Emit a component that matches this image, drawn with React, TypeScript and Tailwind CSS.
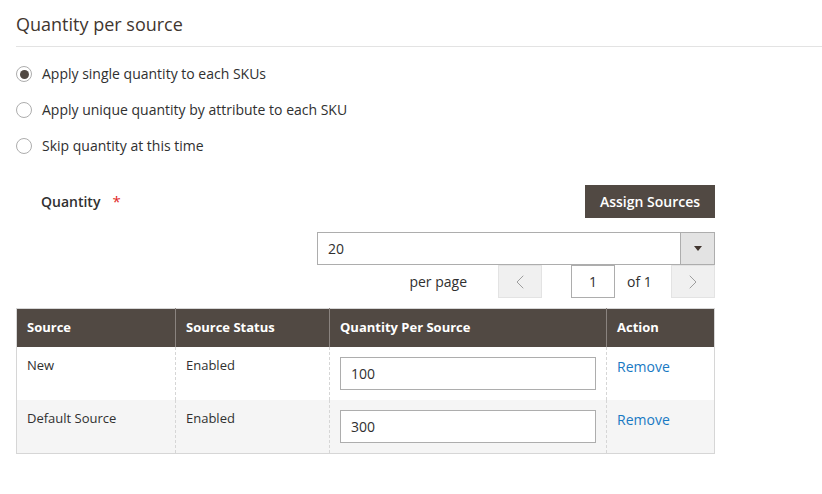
import { ChevronLeft, ChevronRight } from 'lucide-react'

const sources = [
	{ name: 'New', status: 'Enabled', qty: '100' },
	{ name: 'Default Source', status: 'Enabled', qty: '300' }
]

const options = [
	'Apply single quantity to each SKUs',
	'Apply unique quantity by attribute to each SKU',
	'Skip quantity at this time'
]

export default function App() {
	return (
		<div className="w-[822px] h-[494px] bg-white font-['Open_Sans',sans-serif] text-[#303030] pl-[16px] pt-[12px] overflow-hidden">
			<h2 className="text-[18px] leading-[24px] font-normal text-[#41362f] pb-[10px] border-b border-[#e3e3e3]">
				Quantity per source
			</h2>

			<div className="flex flex-col gap-[16px] mt-[17px]">
				{options.map((label, i) => (
					<label key={i} className="flex items-center gap-[10px] text-[14px] leading-[20px]">
						<span className="w-[16px] h-[16px] rounded-full border border-[#adadad] bg-white flex items-center justify-center">
							{i === 0 && <span className="w-[9px] h-[9px] rounded-full bg-[#514943]" />}
						</span>
						{label}
					</label>
				))}
			</div>

			<div className="w-[699px] mt-[29px]">
				<div className="flex items-center justify-between">
					<div className="pl-[25px] text-[14px] font-semibold flex items-center">
						Quantity
						<span className="text-[#e22626] font-normal ml-[12px] text-[15px]">*</span>
					</div>
					<button className="h-[33px] w-[130px] bg-[#514943] text-white text-[14px] font-semibold">
						Assign Sources
					</button>
				</div>

				<div className="flex justify-end mt-[14px]">
					<div className="w-[398px] h-[33px] border border-[#adadad] flex">
						<div className="flex-1 px-[10px] flex items-center text-[14px]">20</div>
						<div className="w-[34px] bg-[#e3e3e3] border-l border-[#adadad] flex items-center justify-center">
							<span className="w-0 h-0 border-l-[4px] border-r-[4px] border-t-[5px] border-l-transparent border-r-transparent border-t-[#41362f]" />
						</div>
					</div>
				</div>

				<div className="flex justify-end items-center h-[33px] text-[14px]">
					<span className="mr-[31px] text-[#303030]">per page</span>
					<div className="w-[44px] h-[33px] bg-[#f0f0f0] border border-[#e3e3e3] flex items-center justify-center text-[#9e9e9e]">
						<ChevronLeft size={24} strokeWidth={1} />
					</div>
					<div className="ml-[29px] w-[44px] h-[33px] border border-[#adadad] flex items-center justify-center">
						1
					</div>
					<span className="ml-[12px] w-[44px]">
						of <span className="text-[#303030]">1</span>
					</span>
					<div className="w-[44px] h-[33px] bg-[#f0f0f0] border border-[#e3e3e3] flex items-center justify-center text-[#9e9e9e]">
						<ChevronRight size={24} strokeWidth={1} />
					</div>
				</div>

				<table className="mt-[10px] w-[699px] border-collapse text-[13px] border border-[#d6d6d6] table-fixed">
					<thead>
						<tr className="bg-[#514943] text-white h-[38px] text-left">
							<th className="w-[159px] px-[10px] font-bold border-r border-[#8a837f]">Source</th>
							<th className="w-[154px] px-[10px] font-bold border-r border-[#8a837f]">Source Status</th>
							<th className="w-[277px] px-[10px] font-bold border-r border-[#8a837f]">Quantity Per Source</th>
							<th className="px-[10px] font-bold">Action</th>
						</tr>
					</thead>
					<tbody>
						{sources.map((s, i) => (
							<tr key={s.name} className={i % 2 === 1 ? 'bg-[#f5f5f5]' : 'bg-white'}>
								<td className="align-top px-[10px] pt-[9px] border-r border-dashed border-[#d6d6d6]">{s.name}</td>
								<td className="align-top px-[10px] pt-[9px] border-r border-dashed border-[#d6d6d6]">{s.status}</td>
								<td className="align-top px-[10px] py-[10px] border-r border-dashed border-[#d6d6d6]">
									<div className="h-[33px] w-[256px] bg-white border border-[#adadad] flex items-center px-[10px] text-[14px]">
										{s.qty}
									</div>
								</td>
								<td className="align-top px-[10px] pt-[9px]">
									<a className="text-[#1979c3] text-[14px]">Remove</a>
								</td>
							</tr>
						))}
					</tbody>
				</table>
			</div>
		</div>
	)
}
